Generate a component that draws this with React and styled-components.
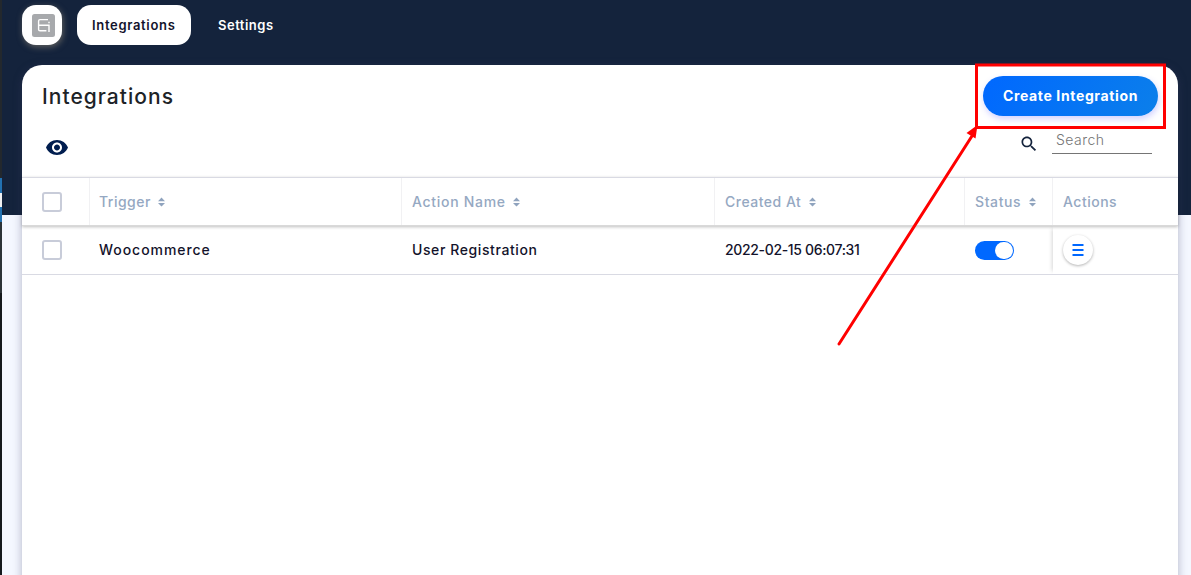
import React from "react";
import styled, { createGlobalStyle } from "styled-components";

const GlobalStyle = createGlobalStyle`
  *, *::before, *::after { box-sizing: border-box; }
  body { margin: 0; font-family: Inter, "Liberation Sans", sans-serif; color: #13132b; overflow: hidden; }
  button, input { font-family: inherit; }
`;

const Page = styled.div`
  position: relative;
  display: flex;
  height: 575px;
  overflow: hidden;
  background: #f4f7ff;
`;

const AdminRail = styled.div`
  flex: 0 0 2px;
  background: linear-gradient(#23282d 0 178px, #2271b1 178px 193px, #f0f0f1 193px 207px, #2271b1 207px 222px, #2c3338 222px 293px, #15191d 293px);
`;

const Main = styled.main`
  flex: 1;
  min-width: 0;
  padding: 5px 13px 0 20px;
  background: linear-gradient(#14233c 0 215px, #f4f7ff 215px);
`;

const TopBar = styled.nav`
  display: flex;
  align-items: center;
  height: 40px;
  margin-bottom: 20px;
`;

const Logo = styled.div`
  display: grid;
  place-items: center;
  width: 40px;
  height: 40px;
  margin-right: 15px;
  padding: 0 0 0 3px;
  border-radius: 14px;
  background: #fff;
  box-shadow: 1px 2px 6px rgba(150, 140, 120, 0.6);
`;

const Tab = styled.a`
  display: flex;
  align-items: center;
  height: 40px;
  padding: 0 15px;
  margin-right: 12px;
  width: ${(p) => p.$width};
  border-radius: 14px;
  font-size: 13px;
  font-weight: 600;
  letter-spacing: ${(p) => p.$track};
  white-space: nowrap;
  color: ${(p) => (p.$active ? "#13132b" : "#fff")};
  background: ${(p) => (p.$active ? "#fff" : "transparent")};
`;

const Panel = styled.section`
  height: 540px;
  border-radius: 20px 20px 0 0;
  background: #fff;
  box-shadow: 0 2px 10px rgba(60, 60, 100, 0.36);
`;

const PanelHead = styled.header`
  display: flex;
  justify-content: space-between;
  align-items: center;
  height: 62px;
  padding: 0 20px;
`;

const Title = styled.h1`
  margin: 0;
  padding-top: 1px;
  font-size: 21px;
  font-weight: 500;
  line-height: 26px;
  letter-spacing: 1.03px;
  color: #1d2327;
`;

const CreateButton = styled.button`
  width: 175px;
  height: 40px;
  padding: 0 0 2px;
  border: 0;
  border-radius: 20px;
  font-size: 14px;
  font-weight: 700;
  letter-spacing: 0.64px;
  white-space: nowrap;
  color: #fff;
  background: linear-gradient(120deg, #0068ff, #0b7fea);
  box-shadow: 1px 3px 6px rgba(90, 90, 255, 0.28);
`;

const Tools = styled.div`
  display: flex;
  justify-content: space-between;
  height: 50px;
  padding: 0 26px 0 23px;
`;

const EyeButton = styled.span`
  display: block;
  padding-top: 8px;
  height: 40px;
`;

const SearchBox = styled.label`
  display: flex;
  gap: 13px;
`;

const SearchGlyph = styled.span`
  padding-top: 7px;
`;

const SearchInput = styled.input`
  width: 100px;
  height: 27px;
  padding: 0 4px 2px;
  border: 0;
  border-bottom: 1px solid #757575;
  outline: 0;
  background: transparent;
  font-size: 14px;
  font-weight: 300;
  letter-spacing: 0.45px;
  &::placeholder { color: #757575; opacity: 1; }
`;

const Row = styled.div`
  display: grid;
  grid-template-columns: 68px 312px 313px 250px 88px 1fr;
  border-bottom: 1px solid #d9dae3;
`;

const HeadRow = styled(Row)`
  position: relative;
  height: 49px;
  border-top: 1px solid #d9dae3;
  border-bottom: 1px solid #d9d9d9;
  box-shadow: 0 1px 3px rgba(0, 0, 0, 0.25);
`;

const BodyRow = styled(Row)`
  height: 49px;
`;

const Cell = styled.div`
  display: flex;
  align-items: center;
  padding-left: ${(p) => p.$pad || "10px"};
  font-size: 14px;
  font-weight: 500;
  letter-spacing: ${(p) => p.$track || "normal"};
  white-space: nowrap;
  color: #13132b;
`;

const TextCell = styled(Cell)`
  padding-bottom: 2px;
`;

const HeadCell = styled(Cell)`
  gap: 7.5px;
  color: #95a8c2;
  border-right: ${(p) => (p.$last ? "0" : "1px solid #f1f1f3")};
`;

const ActionCell = styled(Cell)`
  box-shadow: -4px 0 4px -3px rgba(0, 0, 0, 0.16);
`;

const Checkbox = styled.span`
  width: 20px;
  height: 20px;
  border: 2px solid #c8ccd9;
  border-radius: 3px;
`;

const Toggle = styled.span`
  display: flex;
  justify-content: flex-end;
  width: 39px;
  height: 19px;
  margin-top: 1px;
  padding: 1px;
  border-radius: 10px;
  background: #0068ff;
  &::after {
    content: "";
    width: 18px;
    height: 17px;
    border-radius: 9px;
    background: #fff;
  }
`;

const MenuButton = styled.span`
  display: grid;
  place-items: center;
  width: 30px;
  height: 30px;
  border-radius: 50%;
  background: #fff;
  box-shadow: 0 1px 3px rgba(0, 0, 0, 0.3);
`;

const Callout = styled.svg`
  position: absolute;
  inset: 0;
  pointer-events: none;
`;

const SortIcon = () => (
  <svg width="7" height="11" viewBox="0 0 7 11" fill="#8fa3be">
    <path d="M3.5 1.6 7 5.2H0zM3.5 10.6 7 7H0z" />
  </svg>
);

const LogoMark = () => (
  <svg width="23" height="23" viewBox="0 0 23 23">
    <rect width="23" height="23" rx="2.5" fill="#a7a9ac" />
    <path d="M16 5.6H8Q6.6 5.6 6.6 7V15.4Q6.6 16.8 8 16.8H14.4M6.6 11.2H17V18" fill="none" stroke="#fff" strokeWidth="1.4" />
    <path d="M16.3 7.8h1.4v1.4h-1.4z" fill="#fff" />
  </svg>
);

const columns = [
  { label: "Trigger", pad: "9px", track: "0.48px", sort: true },
  { label: "Action Name", pad: "10px", track: "0.7px", sort: true },
  { label: "Created At", pad: "10px", track: "0.5px", sort: true },
  { label: "Status", pad: "10px", track: "0.6px", sort: true },
  { label: "Actions", pad: "10px", track: "0.5px", sort: false },
];

export default function App() {
  return (
    <Page>
      <GlobalStyle />
      <AdminRail />
      <Main>
        <TopBar>
          <Logo><LogoMark /></Logo>
          <Tab $active $width="114px" $track="0.68px">Integrations</Tab>
          <Tab $track="0.5px">Settings</Tab>
        </TopBar>
        <Panel>
          <PanelHead>
            <Title>Integrations</Title>
            <CreateButton>Create Integration</CreateButton>
          </PanelHead>
          <Tools>
            <EyeButton>
              <svg width="24" height="24" viewBox="0 -0.5 24 24" fill="#001d4f">
                <path d="M12 4.5C7 4.5 2.73 7.61 1 12c1.73 4.39 6 7.5 11 7.5s9.27-3.11 11-7.5c-1.73-4.39-6-7.5-11-7.5zM12 17c-2.76 0-5-2.24-5-5s2.24-5 5-5 5 2.24 5 5-2.24 5-5 5zm0-8c-1.66 0-3 1.34-3 3s1.34 3 3 3 3-1.34 3-3-1.34-3-3-3z" />
              </svg>
            </EyeButton>
            <SearchBox>
              <SearchGlyph>
                <svg width="20" height="20" viewBox="0 0 24 24" fill="#14233c">
                  <path d="M15.5 14h-.79l-.28-.27C15.41 12.59 16 11.11 16 9.5 16 5.91 13.09 3 9.5 3S3 5.91 3 9.5 5.91 16 9.5 16c1.61 0 3.09-.59 4.23-1.57l.27.28v.79l5 4.99L20.49 19l-4.99-5zm-6 0C7.01 14 5 11.99 5 9.5S7.01 5 9.5 5 14 7.01 14 9.5 11.99 14 9.5 14z" />
                </svg>
              </SearchGlyph>
              <SearchInput placeholder="Search" />
            </SearchBox>
          </Tools>
          <HeadRow>
            <HeadCell $pad="20px"><Checkbox /></HeadCell>
            {columns.map((c) => (
              <HeadCell key={c.label} $pad={c.pad} $track={c.track} $last={!c.sort}>
                <span>{c.label}</span>
                {c.sort && <SortIcon />}
              </HeadCell>
            ))}
          </HeadRow>
          <BodyRow>
            <Cell $pad="20px"><Checkbox /></Cell>
            <TextCell $pad="9px" $track="0.95px">Woocommerce</TextCell>
            <TextCell $track="0.6px">User Registration</TextCell>
            <TextCell $track="-0.34px">2022-02-15 06:07:31</TextCell>
            <Cell><Toggle /></Cell>
            <ActionCell>
              <MenuButton>
                <svg width="12" height="12" viewBox="0 0 12 12" fill="#0068ff">
                  <path d="M.5 0h11v2h-11zM.5 5h11v2h-11zM.5 10h11v2h-11z" />
                </svg>
              </MenuButton>
            </ActionCell>
          </BodyRow>
        </Panel>
      </Main>
      <Callout width="1191" height="575" viewBox="0 0 1191 575">
        <rect x="976.5" y="65" width="188" height="62.5" fill="none" stroke="#f00" strokeWidth="3" />
        <path d="M839 344 972 136" stroke="#f00" strokeWidth="3" strokeLinecap="round" />
        <path d="M977.5 125 975.5 138.5 966.5 133z" fill="#f00" />
      </Callout>
    </Page>
  );
}
